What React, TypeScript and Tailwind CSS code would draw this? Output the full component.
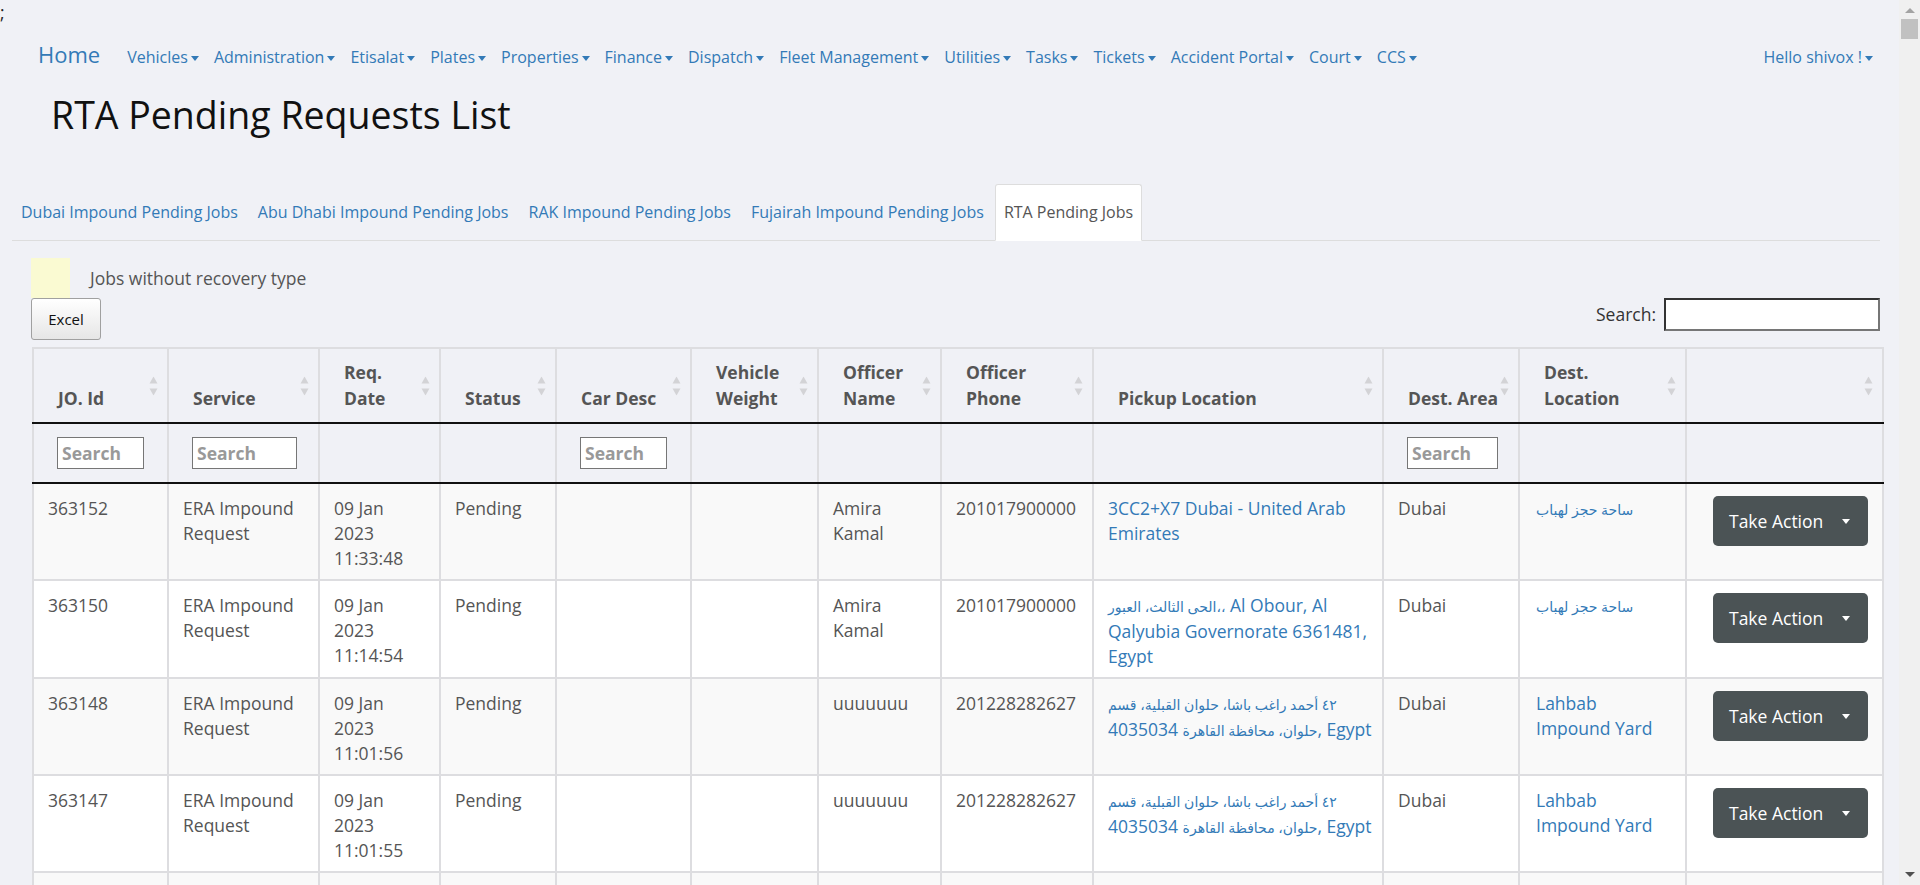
import React from "react";

const navItems = [
  "Vehicles",
  "Administration",
  "Etisalat",
  "Plates",
  "Properties",
  "Finance",
  "Dispatch",
  "Fleet Management",
  "Utilities",
  "Tasks",
  "Tickets",
  "Accident Portal",
  "Court",
  "CCS",
];

const tabs = [
  "Dubai Impound Pending Jobs",
  "Abu Dhabi Impound Pending Jobs",
  "RAK Impound Pending Jobs",
  "Fujairah Impound Pending Jobs",
  "RTA Pending Jobs",
];

// column widths measured off the grid lines
const cols = [135, 151, 121, 116, 135, 127, 123, 152, 290, 136, 167, 197];

const headers: React.ReactNode[] = [
  "JO. Id",
  "Service",
  <>Req.<br />Date</>,
  "Status",
  "Car Desc",
  <>Vehicle<br />Weight</>,
  <>Officer<br />Name</>,
  <>Officer<br />Phone</>,
  "Pickup Location",
  "Dest. Area",
  <>Dest.<br />Location</>,
  "",
];

// which columns carry a filter box, and how wide it is
const filters: Record<number, string> = {
  0: "w-[87px]",
  1: "w-[105px]",
  4: "w-[87px]",
  9: "w-[91px]",
};

// arabic runs are set a little smaller, as the fallback face is wide
function Ar({ children }: { children: React.ReactNode }) {
  return <span className="text-[14px]">{children}</span>;
}

const helwan = (
  <>
    <Ar>٤٢ أحمد راغب باشا، حلوان القبلية، قسم</Ar>
    <br />
    <span className="whitespace-nowrap">
      <Ar>حلوان، محافظة القاهرة</Ar> 4035034, Egypt
    </span>
  </>
);

const yard = <Ar>ساحة حجز لهباب</Ar>;

type Row = {
  id: string;
  time: string;
  officer: string;
  phone: string;
  pickup: React.ReactNode;
  dest: React.ReactNode;
};

const rows: Row[] = [
  {
    id: "363152",
    time: "11:33:48",
    officer: "Amira Kamal",
    phone: "201017900000",
    pickup: "3CC2+X7 Dubai - United Arab Emirates",
    dest: yard,
  },
  {
    id: "363150",
    time: "11:14:54",
    officer: "Amira Kamal",
    phone: "201017900000",
    pickup: (
      <>
        <Ar>الحى الثالث، العبور،،</Ar> Al Obour, Al Qalyubia Governorate 6361481, Egypt
      </>
    ),
    dest: yard,
  },
  {
    id: "363148",
    time: "11:01:56",
    officer: "uuuuuuu",
    phone: "201228282627",
    pickup: helwan,
    dest: "Lahbab Impound Yard",
  },
  {
    id: "363147",
    time: "11:01:55",
    officer: "uuuuuuu",
    phone: "201228282627",
    pickup: helwan,
    dest: "Lahbab Impound Yard",
  },
  {
    id: "363146",
    time: "10:58:12",
    officer: "uuuuuuu",
    phone: "201228282627",
    pickup: "Al Qusais Industrial Area 2, Dubai - United Arab Emirates",
    dest: "Lahbab Impound Yard",
  },
];

function NavCaret() {
  return (
    <span className="inline-block ml-[3px] w-0 h-0 border-t-[5px] border-x-[4px] border-x-transparent border-t-[#337ab7] align-middle" />
  );
}

function SortIcon() {
  return (
    <svg
      width="9"
      height="19"
      viewBox="0 0 9 19"
      className="absolute right-[9px] top-1/2 -translate-y-1/2"
    >
      <path d="M4.5 0 L8.5 7 H0.5 Z" fill="#d3d3d6" />
      <path d="M4.5 19 L8.5 12 H0.5 Z" fill="#d3d3d6" />
    </svg>
  );
}

const cell = "border-2 border-[#dddde0] px-[14px] pt-[12px] pb-[8px] align-top";

export default function App() {
  return (
    <div className="flex h-screen overflow-hidden bg-[#f0f1f6] font-['Open_Sans','DejaVu_Sans',sans-serif] text-[17.5px] leading-[25px] text-[#555]">
      <div className="flex-1 min-w-0 overflow-hidden">
        <div className="h-[25px] text-[#222]">;</div>

        {/* Top navigation */}
        <nav className="mt-[14px] flex items-baseline pl-[38px] pr-[26px]">
          <a className="text-[22px] leading-[30px] text-[#337ab7] mr-[27px]">Home</a>
          <div className="flex items-baseline gap-[15px] text-[16px] leading-[22px] text-[#337ab7]">
            {navItems.map((n) => (
              <a key={n} className="whitespace-nowrap">
                {n}
                <NavCaret />
              </a>
            ))}
          </div>
          <a className="ml-auto text-[16px] leading-[22px] text-[#337ab7] whitespace-nowrap">
            Hello shivox !<NavCaret />
          </a>
        </nav>

        <h1 className="mt-[24px] ml-[51px] text-[37.5px] leading-[44px] text-[#111]">
          RTA Pending Requests List
        </h1>

        {/* Tabs */}
        <div className="mt-[47px] ml-[12px] mr-[19px] flex border-b border-[#ddd] text-[16px]">
          {tabs.map((t, i) => {
            const active = i === tabs.length - 1;
            return (
              <a
                key={t}
                className={
                  active
                    ? "-mb-px mr-[2px] px-[8px] py-[16px] leading-[23px] bg-white border border-[#ddd] border-b-white rounded-t-[3px] text-[#555]"
                    : "-mb-px mr-[2px] px-[8px] py-[16px] leading-[23px] border border-transparent text-[#337ab7]"
                }
              >
                {t}
              </a>
            );
          })}
        </div>

        {/* Legend */}
        <div className="mt-[17px] ml-[31px] flex items-center">
          <div className="w-[39px] h-[40px] bg-[#fafad2]" />
          <span className="ml-[20px]">Jobs without recovery type</span>
        </div>

        {/* Toolbar */}
        <div className="ml-[31px] mr-[19px] flex items-start justify-between">
          <button className="w-[70px] h-[42px] border border-[#a0a0a0] rounded-[3px] bg-linear-to-b from-white to-[#e6e6e6] text-[15px] text-[#111]">
            Excel
          </button>
          <label className="flex items-center gap-[8px] text-[#333]">
            Search:
            <input className="w-[216px] h-[33px] bg-white border-2 border-t-[#333] border-l-[#333] border-r-[#767676] border-b-[#767676] outline-none" />
          </label>
        </div>

        {/* Table */}
        <table className="mt-[7px] ml-[32px] w-[1850px] table-fixed border-collapse">
          <colgroup>
            {cols.map((w, i) => (
              <col key={i} style={{ width: w }} />
            ))}
          </colgroup>
          <thead>
            <tr>
              {headers.map((h, i) => (
                <th
                  key={i}
                  className="relative border-2 border-[#dddde0] border-b-[#111] pl-[24px] pr-[16px] pt-[10px] pb-[11px] text-left align-bottom font-bold leading-[26px] whitespace-nowrap text-[#555]"
                >
                  {h}
                  <SortIcon />
                </th>
              ))}
            </tr>
            <tr>
              {cols.map((_, i) => (
                <td
                  key={i}
                  className="h-[60px] border-2 border-[#dddde0] border-b-[#111] pl-[23px] align-middle"
                >
                  {filters[i] && (
                    <input
                      placeholder="Search"
                      className={`${filters[i]} h-[32px] bg-white border border-[#767676] pl-[4px] font-bold text-[17.5px] placeholder:text-[#999] outline-none`}
                    />
                  )}
                </td>
              ))}
            </tr>
          </thead>
          <tbody>
            {rows.map((r, i) => (
              <tr key={r.id} className={i % 2 === 0 ? "bg-[#f9f9f9]" : "bg-white"}>
                <td className={cell}>{r.id}</td>
                <td className={cell}>ERA Impound Request</td>
                <td className={cell}>
                  09 Jan
                  <br />
                  2023
                  <br />
                  {r.time}
                </td>
                <td className={cell}>Pending</td>
                <td className={cell} />
                <td className={cell} />
                <td className={cell}>{r.officer}</td>
                <td className={cell}>{r.phone}</td>
                <td className={cell}>
                  <a className="text-[#337ab7]">{r.pickup}</a>
                </td>
                <td className={cell}>Dubai</td>
                <td className="border-2 border-[#dddde0] px-[16px] pt-[12px] pb-[8px] align-top">
                  <a className="text-[#337ab7]">{r.dest}</a>
                </td>
                <td className="border-2 border-[#dddde0] pl-[26px] pt-[12px] pb-[8px] align-top">
                  <button className="flex items-center w-[155px] h-[50px] pl-[16px] rounded-[5px] bg-[#4b5355] text-white">
                    Take Action
                    <span className="ml-[19px] w-0 h-0 border-t-[5px] border-x-[4px] border-x-transparent border-t-white" />
                  </button>
                </td>
              </tr>
            ))}
          </tbody>
        </table>
      </div>

      {/* Scrollbar */}
      <div className="w-[21px] shrink-0 flex flex-col items-center bg-[#f0f0f0]">
        <span className="mt-[8px] w-0 h-0 border-b-[5px] border-x-[5px] border-x-transparent border-b-[#a3a3a3]" />
        <div className="mt-[6px] w-[17px] h-[20px] bg-[#c1c1c1]" />
        <div className="flex-1" />
        <span className="mb-[8px] w-0 h-0 border-t-[5px] border-x-[5px] border-x-transparent border-t-[#505050]" />
      </div>
    </div>
  );
}
